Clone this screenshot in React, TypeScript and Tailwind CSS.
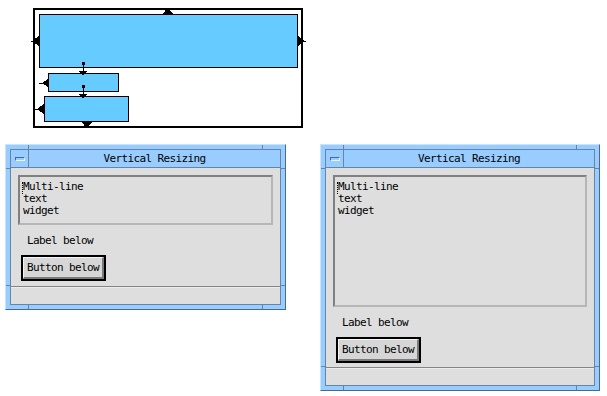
import React from "react";

const mono = "font-['DejaVu_Sans_Mono',monospace] text-[11px] tracking-[-0.62px] text-black";

function Ticks() {
  const c = "absolute bg-[#6585a5]";
  return (
    <>
      <span className={`${c} left-[22px] top-0 w-px h-[5px]`} />
      <span className={`${c} right-[22px] top-0 w-px h-[5px]`} />
      <span className={`${c} left-[22px] bottom-0 w-px h-[5px]`} />
      <span className={`${c} right-[22px] bottom-0 w-px h-[5px]`} />
      <span className={`${c} left-0 top-[23px] h-px w-[5px]`} />
      <span className={`${c} right-0 top-[23px] h-px w-[5px]`} />
      <span className={`${c} left-0 bottom-[23px] h-px w-[5px]`} />
      <span className={`${c} right-0 bottom-[23px] h-px w-[5px]`} />
    </>
  );
}

function Window({ tall }: { tall: boolean }) {
  return (
    <div
      className={`relative flex flex-col bg-[#99ccff] border border-t-[#c8e4ff] border-l-[#c8e4ff] border-r-[#4a6a8a] border-b-[#4a6a8a] p-[4px] ${
        tall ? "w-[280px] h-[247px]" : "w-[281px] h-[166px]"
      }`}
    >
      <Ticks />
      <div className="flex flex-col flex-1 border border-[#6585a5]">
        <div className="flex h-[18px] border-b border-[#6585a5] bg-[#99ccff]">
          <div className="w-[18px] border-r border-[#6585a5] flex items-center justify-center">
            <div className="w-[10px] h-[4px] border border-t-[#4a6a8a] border-l-[#4a6a8a] border-r-[#e6f3ff] border-b-[#e6f3ff]" />
          </div>
          <div className={`flex-1 flex items-center justify-center leading-[13px] ${mono}`}>
            Vertical Resizing
          </div>
        </div>
        <div className="flex-1 flex flex-col bg-[#dedede] px-[7px] pt-[7px] pb-[4px]">
          <div
            className={`relative border-2 border-t-[#808080] border-l-[#808080] border-r-[#b6b6b6] border-b-[#b6b6b6] px-[3px] pt-[4px] ${
              tall ? "flex-1" : "h-[50px]"
            }`}
          >
            <span className="absolute left-[2px] top-[5px] w-px h-[12px] border-l border-dotted border-black" />
            <div className={`${mono} leading-[12px]`}>Multi-line</div>
            <div className={`${mono} leading-[12px]`}>text</div>
            <div className={`${mono} leading-[12px]`}>widget</div>
          </div>
          <div className={`${mono} leading-[12px] h-[12px] mt-[10px] ml-[9px]`}>Label below</div>
          <div className="mt-[8px] ml-[3px] self-start border-2 border-black">
            <div className="h-[22px] flex items-center bg-[#d6d6d6] border border-t-[#f4f4f4] border-l-[#f4f4f4] border-r-[#7a7a7a] border-b-[#7a7a7a] border-r-2 border-b-2 px-[3px]">
              <span className={`${mono} leading-[12px]`}>Button below</span>
            </div>
          </div>
        </div>
        <div className="h-px bg-[#858585]" />
        <div className="h-[17px] bg-[#dedede] border-t border-[#ececec]" />
      </div>
    </div>
  );
}

function Diagram() {
  return (
    <svg
      className="block ml-[30px] mt-[4px]"
      width={277}
      height={127}
      viewBox="30 4 277 127"
      shapeRendering="crispEdges"
    >
      <rect x={34} y={9} width={268} height={118} fill="white" stroke="black" strokeWidth={2} />
      <rect x={39.5} y={14.5} width={258} height={53} fill="#66ccff" stroke="black" strokeWidth={1} />
      <rect x={48.5} y={73.5} width={70} height={18} fill="#66ccff" stroke="black" strokeWidth={1} />
      <rect x={44.5} y={96.5} width={84} height={25} fill="#66ccff" stroke="black" strokeWidth={1} />
      <polygon points="163,14 173,14 168,7" fill="black" />
      <polygon points="39,36 39,46 32,41" fill="black" />
      <line x1={31} y1={41} x2={33} y2={41} stroke="black" />
      <polygon points="298,36 298,46 305,41" fill="black" />
      <line x1={304} y1={41} x2={306} y2={41} stroke="black" />
      <polygon points="82,122 92,122 87,129" fill="black" />
      <rect x={81.5} y={61.5} width={3} height={3} fill="black" />
      <line x1={83} y1={63} x2={83} y2={72} stroke="black" />
      <polygon points="79,71 87,71 83,76" fill="black" />
      <rect x={81.5} y={84.5} width={3} height={3} fill="black" />
      <line x1={83} y1={86} x2={83} y2={95} stroke="black" />
      <polygon points="79,94 87,94 83,99" fill="black" />
      <polygon points="48,79 48,87 42,83" fill="black" />
      <line x1={39} y1={83} x2={43} y2={83} stroke="black" />
      <polygon points="44,104 44,114 37,109" fill="black" />
      <line x1={35} y1={109} x2={38} y2={109} stroke="black" />
    </svg>
  );
}

export default function App() {
  return (
    <div className="w-[607px] h-[396px] bg-white overflow-hidden">
      <Diagram />
      <div className="flex items-start gap-[34px] pl-[5px] mt-[13px]">
        <Window tall={false} />
        <Window tall={true} />
      </div>
    </div>
  );
}
